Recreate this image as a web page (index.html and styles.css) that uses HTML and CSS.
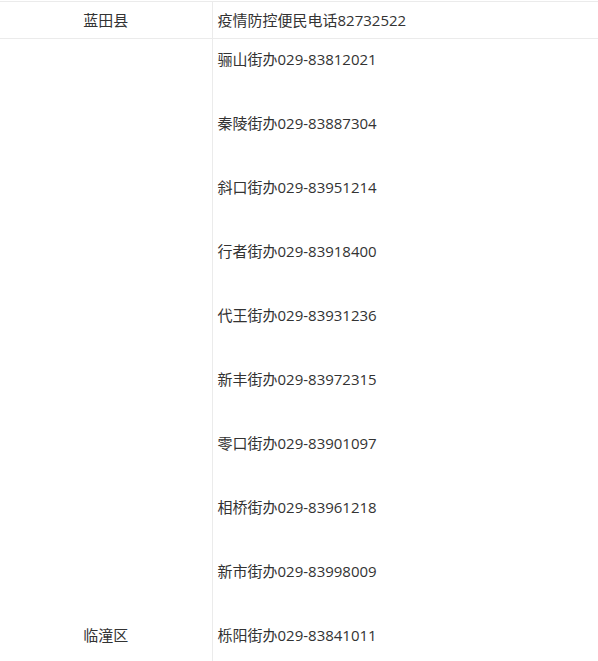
FILE: index.html
```html
<!DOCTYPE html>
<html lang="zh-CN">
<head>
<meta charset="utf-8">
<title>便民电话</title>
<link rel="stylesheet" href="styles.css">
</head>
<body>
<div class="wrap">
<table class="phones">
  <colgroup><col class="c-area"><col class="c-info"></colgroup>
  <tbody>
    <tr class="row-single">
      <td class="area">蓝田县</td>
      <td class="info">疫情防控便民电话82732522</td>
    </tr>
    <tr class="row-multi">
      <td class="area">临潼区</td>
      <td class="info">
        <p>骊山街办029-83812021</p>
        <p>秦陵街办029-83887304</p>
        <p>斜口街办029-83951214</p>
        <p>行者街办029-83918400</p>
        <p>代王街办029-83931236</p>
        <p>新丰街办029-83972315</p>
        <p>零口街办029-83901097</p>
        <p>相桥街办029-83961218</p>
        <p>新市街办029-83998009</p>
        <p>栎阳街办029-83841011</p>
        <p>雨金街办029-83821102</p>
        <p>徐杨街办029-83861203</p>
        <p>西泉街办029-83851017</p>
        <p>北田街办029-83981216</p>
        <p>油槐街办029-83871015</p>
        <p>何寨街办029-83891221</p>
        <p>交口街办029-83831009</p>
        <p>任留街办029-83941015</p>
        <p>铁炉街办029-83921012</p>
      </td>
    </tr>
  </tbody>
</table>
</div>
</body>
</html>
```
FILE: styles.css
```css
html, body {
  margin: 0;
  padding: 0;
  background: #ffffff;
}

.wrap {
  padding-top: 1px;
}

.phones {
  width: 100%;
  border-collapse: collapse;
  table-layout: fixed;
  border-top: 1px solid #ebebeb;
  font-family: "Open Sans", "Noto Sans CJK SC", sans-serif;
  font-size: 15px;
  color: #333333;
}

.c-area {
  width: 212px;
}

.phones td {
  padding: 3px 5px;
  border-bottom: 1px solid #ebebeb;
  vertical-align: middle;
}

.phones td.area {
  text-align: center;
  border-right: 1px solid #ebebeb;
}

.phones td.info {
  text-align: left;
}

.row-single td {
  line-height: 30px;
}

.row-multi td {
  line-height: 32px;
  padding-top: 4px;
}

.row-multi p {
  margin: 0 0 32px 0;
}

.row-multi p:last-child {
  margin-bottom: 0;
}
```
